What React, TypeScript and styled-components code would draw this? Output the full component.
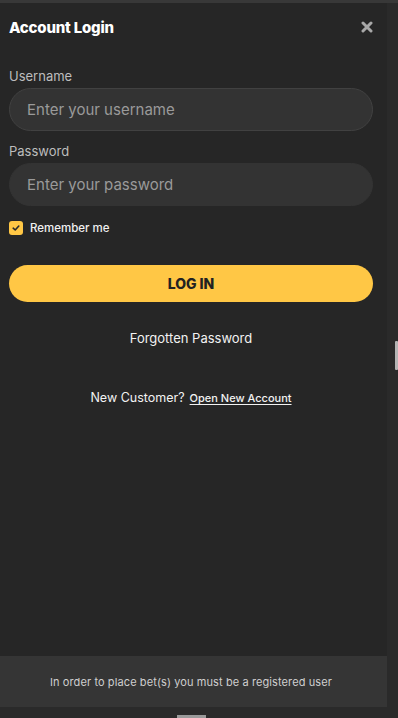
import React, { useState } from "react";
import styled, { createGlobalStyle } from "styled-components";

const GlobalStyle = createGlobalStyle`
  html, body { margin: 0; padding: 0; }
  body {
    background: #2a2a2a;
    font-family: Inter, "Open Sans", "Liberation Sans", sans-serif;
    -webkit-font-smoothing: antialiased;
  }
  * { box-sizing: border-box; }
`;

const Page = styled.div`
  display: flex;
  width: 398px;
  height: 718px;
  background: #2a2a2a;
  border-top: 3px solid #383838;
`;

const Panel = styled.div`
  width: 387px;
  display: flex;
  flex-direction: column;
  background: #262626;
`;

const Side = styled.div`
  flex: 1;
  position: relative;
  background: #2a2a2a;
`;

const ScrollThumb = styled.div`
  position: absolute;
  right: 0;
  top: 338px;
  width: 3px;
  height: 29px;
  background: #b5b5b5;
  border-radius: 1px;
`;

const Content = styled.div`
  flex: 1;
  display: flex;
  flex-direction: column;
  padding: 0 14px 0 9px;
`;

const Header = styled.div`
  height: 48px;
  display: flex;
  align-items: center;
  justify-content: space-between;
`;

const Title = styled.h1`
  margin: 0;
  font-size: 15px;
  font-weight: 800;
  color: #ffffff;
  letter-spacing: -0.2px;
`;

const CloseButton = styled.button`
  width: 16px;
  height: 16px;
  padding: 0;
  margin-right: -2px;
  border: none;
  background: transparent;
  display: flex;
  align-items: center;
  justify-content: center;
  cursor: pointer;
`;

const Label = styled.label<{ $top: number }>`
  display: block;
  margin-top: ${(p) => p.$top}px;
  margin-bottom: 3px;
  font-size: 13px;
  line-height: 18px;
  color: #bdbdbd;
`;

const Input = styled.input<{ $focused?: boolean }>`
  width: 100%;
  height: 43px;
  border-radius: 22px;
  border: 1px solid ${(p) => (p.$focused ? "#414141" : "#333333")};
  background: #333333;
  padding: 0 17px;
  font-family: inherit;
  font-size: 15px;
  color: #ddd;
  outline: none;
  &::placeholder { color: #9a9a9a; }
`;

const CheckRow = styled.label`
  display: flex;
  align-items: center;
  gap: 7px;
  margin-top: 15px;
  cursor: pointer;
`;

const CheckBox = styled.span`
  width: 14px;
  height: 14px;
  border-radius: 3px;
  background: #ffc745;
  display: flex;
  align-items: center;
  justify-content: center;
`;

const CheckText = styled.span`
  font-size: 11.5px;
  font-weight: 500;
  color: #f0f0f0;
`;

const LoginButton = styled.button`
  margin-top: 30px;
  height: 37px;
  width: 100%;
  border: none;
  border-radius: 19px;
  background: #ffc745;
  color: #222;
  font-family: inherit;
  font-size: 14px;
  font-weight: 800;
  cursor: pointer;
`;

const Forgotten = styled.a`
  margin-top: 28px;
  align-self: center;
  font-size: 13px;
  color: #f2f2f2;
  text-decoration: none;
`;

const NewCustomer = styled.p`
  margin: 44px 0 0;
  text-align: center;
  font-size: 12.5px;
  color: #f2f2f2;
`;

const OpenLink = styled.a`
  margin-left: 5px;
  font-size: 11px;
  font-weight: 500;
  color: #f2f2f2;
  text-decoration: underline;
  text-underline-offset: 2px;
`;

const Footer = styled.div`
  height: 51px;
  background: #353535;
  display: flex;
  align-items: center;
  justify-content: center;
  padding-right: 5px;
  font-size: 11px;
  letter-spacing: 0.1px;
  color: #cfcfcf;
`;

const BottomStrip = styled.div`
  height: 11px;
  background: #2a2a2a;
  display: flex;
  align-items: flex-end;
  justify-content: center;
  padding-right: 4px;
`;

const Handle = styled.div`
  width: 29px;
  height: 3px;
  background: #9a9a9a;
`;

export default function App() {
  const [remember, setRemember] = useState(true);
  return (
    <>
      <GlobalStyle />
      <Page>
        <Panel>
          <Content>
            <Header>
              <Title>Account Login</Title>
              <CloseButton aria-label="Close">
                <svg width="12" height="12" viewBox="0 0 12 12">
                  <path d="M2 2 L10 10 M10 2 L2 10" stroke="#a8a8a8" strokeWidth="3" strokeLinecap="round" />
                </svg>
              </CloseButton>
            </Header>
            <Label $top={16}>Username</Label>
            <Input $focused placeholder="Enter your username" autoFocus />
            <Label $top={11}>Password</Label>
            <Input type="password" placeholder="Enter your password" />
            <CheckRow onClick={() => setRemember(!remember)}>
              <CheckBox>
                {remember && (
                  <svg width="8" height="8" viewBox="0 0 8 8">
                    <path d="M1.2 4.2 L3.2 6 L6.8 2" stroke="#2a2a2a" strokeWidth="1.6" fill="none" strokeLinecap="round" strokeLinejoin="round" />
                  </svg>
                )}
              </CheckBox>
              <CheckText>Remember me</CheckText>
            </CheckRow>
            <LoginButton>LOG IN</LoginButton>
            <Forgotten href="#">Forgotten Password</Forgotten>
            <NewCustomer>
              New Customer?<OpenLink href="#">Open New Account</OpenLink>
            </NewCustomer>
          </Content>
          <Footer>In order to place bet(s) you must be a registered user</Footer>
          <BottomStrip>
            <Handle />
          </BottomStrip>
        </Panel>
        <Side>
          <ScrollThumb />
        </Side>
      </Page>
    </>
  );
}
